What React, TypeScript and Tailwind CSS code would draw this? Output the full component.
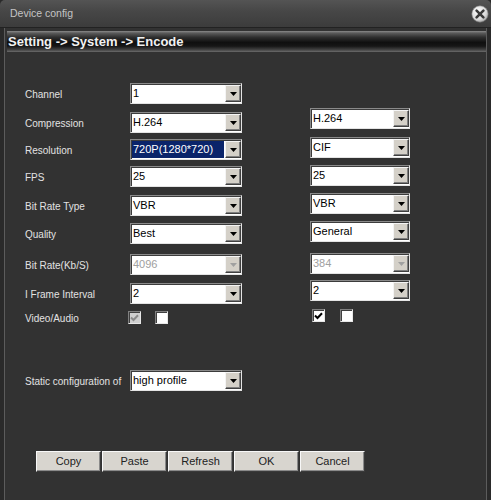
import React from "react";

type SelProps = {
  value: string;
  w: string;
  disabled?: boolean;
  selected?: boolean;
  extra?: string;
};

function Arrow({ disabled }: { disabled?: boolean }) {
  return (
    <svg width="7" height="4" viewBox="0 0 7 4" className="mt-[1px]">
      <polygon points="0,0 7,0 3.5,4" fill={disabled ? "#a0a0a0" : "#000"} />
    </svg>
  );
}

function Select({ value, w, disabled, selected, extra }: SelProps) {
  return (
    <div
      className={`${w} ${extra ?? ""} flex h-[21px] shrink-0 bg-white border border-t-[#8a8a8a] border-l-[#8a8a8a] border-b-[#e4e4e4] border-r-[#e4e4e4] shadow-[inset_1px_1px_0_#3c3c3c]`}
    >
      <div className="flex-1 flex pl-[1px] pt-[1px] pb-[1px] min-w-0">
        <div
          className={
            selected
              ? "flex-1 flex items-center pl-[1px] bg-[#0a246a] text-white text-[11px] leading-none"
              : `flex-1 flex items-center pl-[1px] text-[11px] leading-none ${disabled ? "text-[#a0a0a0]" : "text-black"}`
          }
        >
          {value}
        </div>
      </div>
      <div className="w-[16px] my-[1px] ml-[1px] bg-[#d4d0c8] border border-t-[#f4f4f4] border-l-[#f4f4f4] border-b-[#404040] border-r-[#404040] shadow-[inset_-1px_-1px_0_#808080] flex items-center justify-center">
        <Arrow disabled={disabled} />
      </div>
    </div>
  );
}

function Check({ checked, disabled, extra }: { checked?: boolean; disabled?: boolean; extra?: string }) {
  return (
    <div
      className={`${extra ?? ""} w-[13px] h-[13px] shrink-0 border border-t-[#808080] border-l-[#808080] border-b-[#e8e8e8] border-r-[#e8e8e8] shadow-[inset_1px_1px_0_#404040] flex items-center justify-center ${disabled ? "bg-[#cfcfcf]" : "bg-white"}`}
    >
      {checked && (
        <svg width="9" height="8" viewBox="0 0 9 8">
          <path d="M1 3.5 L3.5 6 L8 1.2" fill="none" stroke={disabled ? "#8a8a8a" : "#000"} strokeWidth="2" />
        </svg>
      )}
    </div>
  );
}

function Btn({ label }: { label: string }) {
  return (
    <div className="w-[65px] h-[21px] bg-[#d8d5cf] border border-t-[#f8f8f8] border-l-[#f8f8f8] border-b-[#3a3a3a] border-r-[#3a3a3a] shadow-[inset_-1px_-1px_0_#8a8a8a] flex items-center justify-center text-[11px] text-[#222]">
      {label}
    </div>
  );
}

type Row = {
  label: string;
  mt: string;
  left: SelProps;
  right?: SelProps;
};

const rows: Row[] = [
  { label: "Channel", mt: "mt-[31px]", left: { value: "1", w: "w-[112px]" } },
  {
    label: "Compression",
    mt: "mt-[8px]",
    left: { value: "H.264", w: "w-[112px]" },
    right: { value: "H.264", w: "w-[100px]", extra: "-mt-[4px]" },
  },
  {
    label: "Resolution",
    mt: "mt-[6px]",
    left: { value: "720P(1280*720)", w: "w-[112px]", selected: true },
    right: { value: "CIF", w: "w-[100px]", extra: "-mt-[2px]" },
  },
  {
    label: "FPS",
    mt: "mt-[6px]",
    left: { value: "25", w: "w-[112px]" },
    right: { value: "25", w: "w-[100px]", extra: "-mt-[1px]" },
  },
  {
    label: "Bit Rate Type",
    mt: "mt-[8px]",
    left: { value: "VBR", w: "w-[112px]" },
    right: { value: "VBR", w: "w-[100px]", extra: "-mt-[2px]" },
  },
  {
    label: "Quality",
    mt: "mt-[7px]",
    left: { value: "Best", w: "w-[112px]" },
    right: { value: "General", w: "w-[100px]", extra: "-mt-[2px]" },
  },
  {
    label: "Bit Rate(Kb/S)",
    mt: "mt-[10px]",
    left: { value: "4096", w: "w-[112px]", disabled: true },
    right: { value: "384", w: "w-[100px]", disabled: true, extra: "-mt-[1px]" },
  },
  {
    label: "I Frame Interval",
    mt: "mt-[8px]",
    left: { value: "2", w: "w-[112px]" },
    right: { value: "2", w: "w-[100px]", extra: "-mt-[3px]" },
  },
];

export default function App() {
  return (
    <div className="w-[491px] h-[500px] bg-[#2a2a2a] flex flex-col overflow-hidden font-['Liberation_Sans',Arial,sans-serif]">
      {/* Title bar */}
      <div className="h-[28px] shrink-0 rounded-t-[5px] bg-[linear-gradient(to_bottom,#545454_0%,#474747_40%,#3c3c3c_100%)] border-b border-[#222] flex items-center justify-between pl-[10px] pr-[2px]">
        <span className="text-[10.5px] text-[#c4c4c4]">Device config</span>
        <svg width="18" height="18" viewBox="0 0 18 18">
          <defs>
            <radialGradient id="cg" cx="40%" cy="35%" r="70%">
              <stop offset="0%" stopColor="#ffffff" />
              <stop offset="70%" stopColor="#d8d8d8" />
              <stop offset="100%" stopColor="#9a9a9a" />
            </radialGradient>
          </defs>
          <circle cx="9" cy="9" r="8.2" fill="url(#cg)" stroke="#777" strokeWidth="0.6" />
          <path d="M5.6 5.6 L12.4 12.4 M12.4 5.6 L5.6 12.4" stroke="#3a3a3a" strokeWidth="2.6" strokeLinecap="round" />
        </svg>
      </div>

      {/* Body */}
      <div className="flex-1 mx-[4px] border-l border-r border-[#5c5c5c] bg-[#323232] flex flex-col">
        <div className="mt-[3px] ml-[2px] h-[21px] shrink-0 bg-[linear-gradient(to_bottom,#8a8a8a_0%,#5a5a5a_10%,#2e2e2e_30%,#0f0f0f_55%,#161616_72%,#444_90%,#6c6c6c_100%)] flex items-center pl-[1px]">
          <span className="text-[13px] font-bold text-[#f2f2f2] leading-none">Setting -&gt; System -&gt; Encode</span>
        </div>

        <div className="pl-[20px] flex flex-col">
          {rows.map((r) => (
            <div key={r.label} className={`${r.mt} flex items-start h-[21px]`}>
              <div className="w-[105px] h-[21px] pt-[2px] flex items-center text-[10px] text-[#e2e2e2] shrink-0">
                {r.label}
              </div>
              <Select {...r.left} />
              {r.right && (
                <div className="ml-[68px]">
                  <Select {...r.right} />
                </div>
              )}
            </div>
          ))}

          <div className="mt-[7px] flex items-start h-[13px]">
            <div className="w-[103px] h-[13px] pt-[1px] flex items-center text-[10px] text-[#e2e2e2] shrink-0">
              Video/Audio
            </div>
            <Check checked disabled />
            <Check extra="ml-[14px]" />
            <Check checked extra="ml-[144px] -mt-[2px]" />
            <Check extra="ml-[15px] -mt-[2px]" />
          </div>

          <div className="mt-[46px] flex items-start h-[21px]">
            <div className="w-[105px] h-[21px] pt-[1px] flex items-center text-[10px] text-[#e2e2e2] shrink-0">
              Static configuration of
            </div>
            <Select value="high profile" w="w-[112px]" />
          </div>

          <div className="mt-[60px] ml-[11px] flex gap-[1px]">
            <Btn label="Copy" />
            <Btn label="Paste" />
            <Btn label="Refresh" />
            <Btn label="OK" />
            <Btn label="Cancel" />
          </div>
        </div>
      </div>
    </div>
  );
}
